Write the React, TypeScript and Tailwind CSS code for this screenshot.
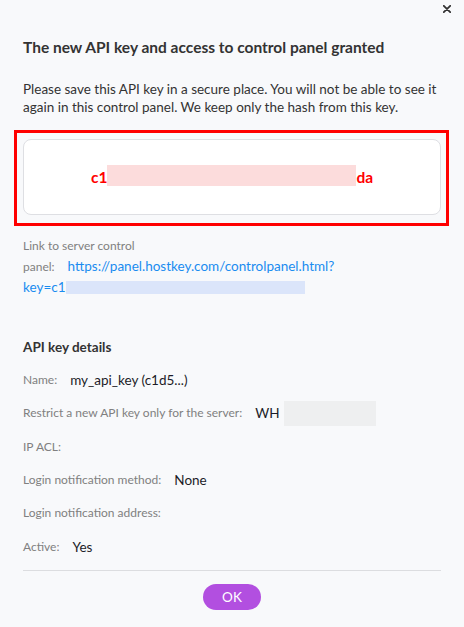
import React from "react";

const font = { fontFamily: 'Lato, "Open Sans", sans-serif' };

function Row({ label, value, extra }: { label: string; value?: string; extra?: React.ReactNode }) {
  return (
    <div className="flex h-[33.33px] items-center leading-[20px]">
      <span className="mr-[13px] text-[12px] text-[#808080]">{label}</span>
      {value && <span className="text-[13.5px] text-[#1c1c28]">{value}</span>}
      {extra}
    </div>
  );
}

export default function App() {
  return (
    <div className="relative h-[627px] w-[464px] overflow-hidden bg-[#f8f9fb] px-[23px] pt-[37px]" style={font}>
      <button className="absolute left-[443px] top-[5px] h-[8px] w-[8px]" aria-label="Close">
        <svg width="8" height="8" viewBox="0 0 8 8" className="block">
          <path d="M0.8 0.8 L7.2 7.2 M7.2 0.8 L0.8 7.2" stroke="#333" strokeWidth="1.8" strokeLinecap="round" />
        </svg>
      </button>

      <h2 className="text-[15.5px] font-bold leading-[20px] text-[#333]">
        The new API key and access to control panel granted
      </h2>
      <p className="mt-[23px] text-[13.5px] leading-[18px] text-[#333]">
        Please save this API key in a secure place. You will not be able to see it again in this control panel. We keep
        only the hash from this key.
      </p>

      <div className="-ml-[9px] -mr-[8px] mt-[14px] border-[3px] border-[#ff0000] pb-[8px] pl-[6px] pr-[5px] pt-[6px]">
        <div className="flex h-[76px] items-center justify-center rounded-[8px] border border-[#dedfe3] bg-white">
          <span className="text-[15.5px] font-bold leading-[20px] text-[#ff0000]">c1</span>
          <span className="mb-[3px] inline-block h-[21px] w-[249px] bg-[#fcdcdc]" />
          <span className="text-[15.5px] font-bold leading-[20px] text-[#ff0000]">da</span>
        </div>
      </div>

      <div className="mt-[10px] leading-[20px]">
        <div className="text-[12px] text-[#808080]">Link to server control</div>
        <div className="flex items-baseline">
          <span className="mr-[13px] text-[12px] text-[#808080]">panel:</span>
          <span className="text-[13.5px] text-[#1a8cf0]">https://panel.hostkey.com/controlpanel.html?</span>
        </div>
        <div className="flex items-center">
          <span className="text-[13.5px] text-[#1a8cf0]">key=c1</span>
          <span className="inline-block h-[13px] w-[239px] bg-[#dbe5fa]" />
        </div>
      </div>

      <h3 className="mt-[40px] text-[13.5px] font-bold leading-[20px] text-[#333]">API key details</h3>
      <div className="mt-[6.33px]">
        <Row label="Name:" value="my_api_key (c1d5...)" />
        <Row
          label="Restrict a new API key only for the server:"
          value="WH"
          extra={<span className="ml-[5px] inline-block h-[25px] w-[92px] bg-[#eeeff0]" />}
        />
        <Row label="IP ACL:" />
        <Row label="Login notification method:" value="None" />
        <Row label="Login notification address:" />
        <Row label="Active:" value="Yes" />
      </div>

      <div className="mt-[6.7px] h-px bg-[#dcdde0]" />

      <div className="mt-[13px] flex justify-center">
        <button className="h-[26px] w-[58px] rounded-full bg-[#b24fe0] text-[13.5px] leading-[26px] text-white">OK</button>
      </div>
    </div>
  );
}
